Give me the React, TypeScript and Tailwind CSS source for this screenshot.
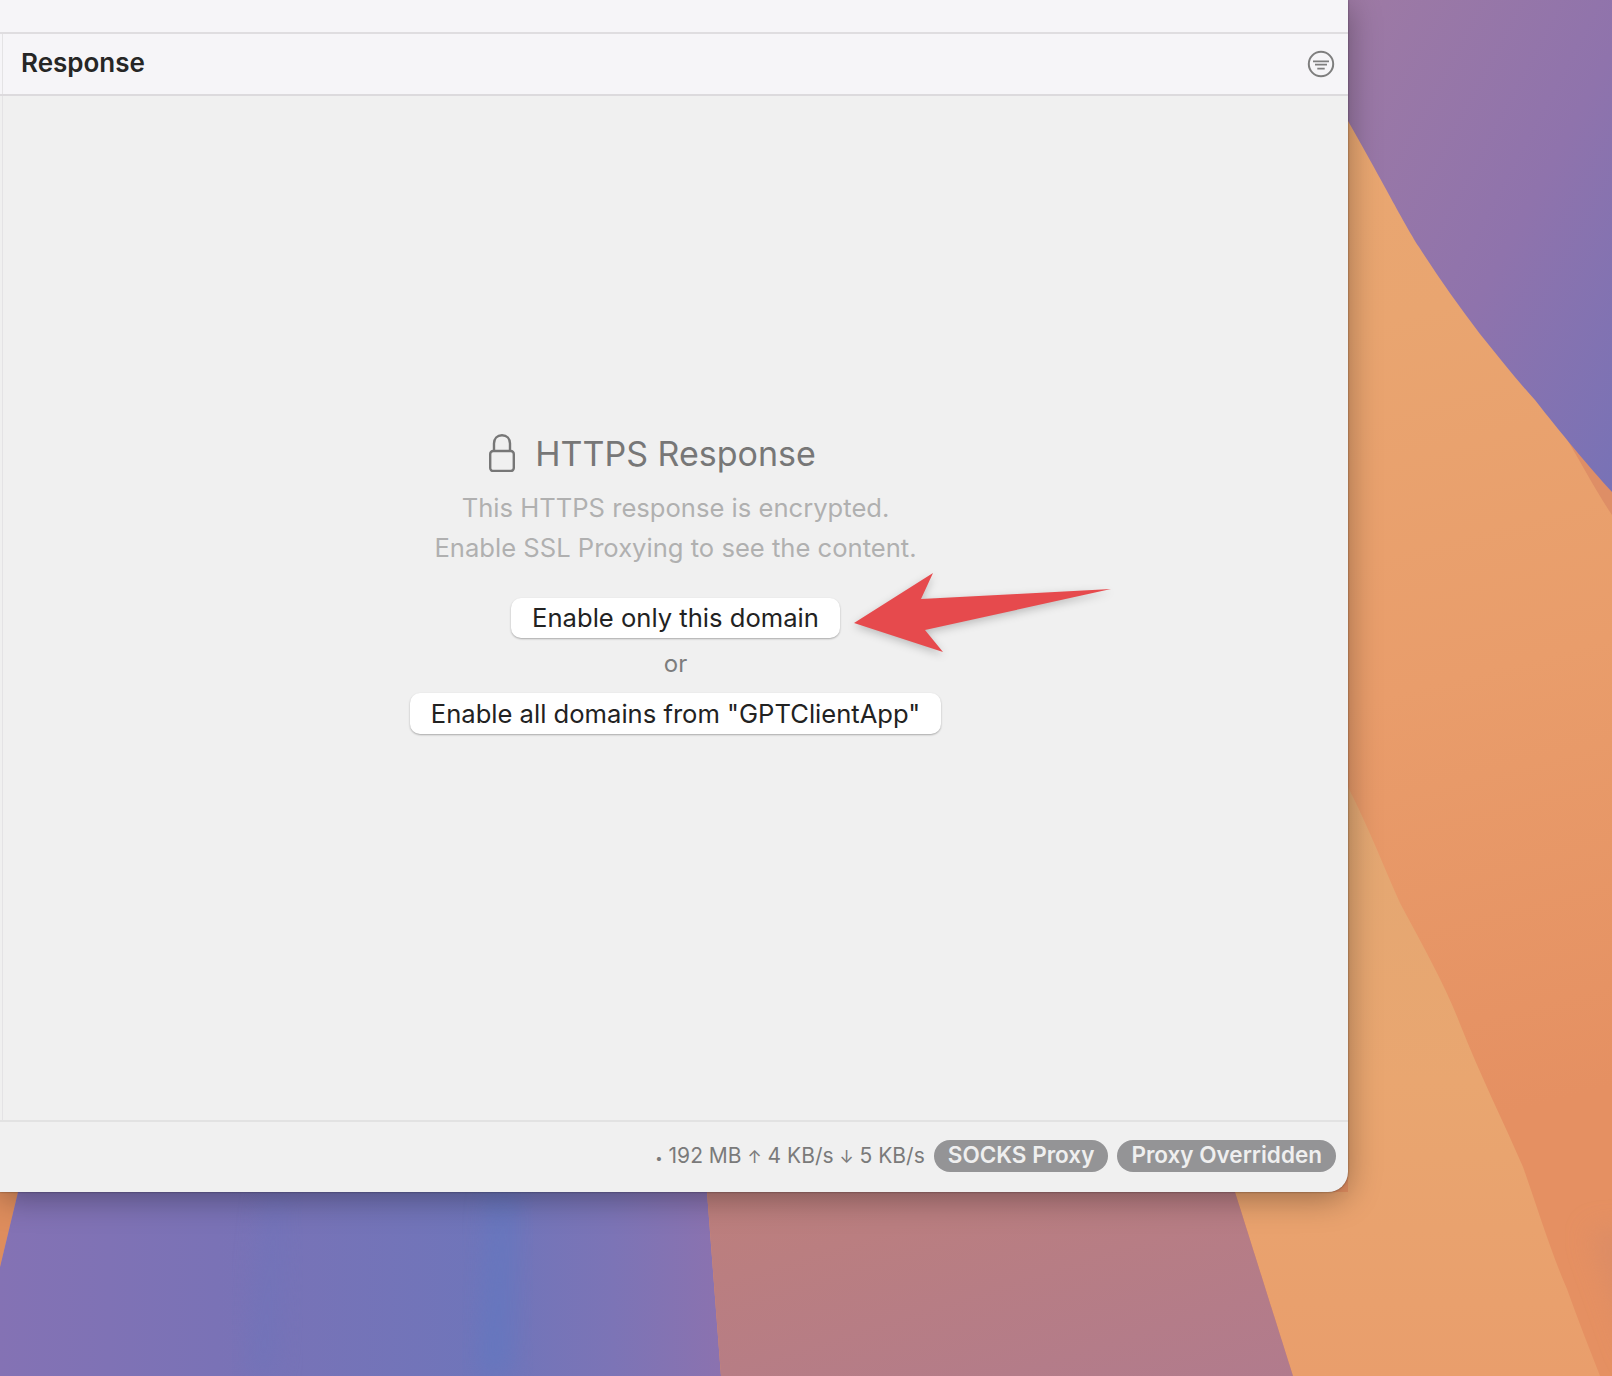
function Wallpaper() {
  return (
    <svg className="absolute inset-0" width="1612" height="1376" viewBox="0 0 1612 1376" aria-hidden>
      <defs>
        <linearGradient id="orange" x1="0" y1="0" x2="0.3" y2="1">
          <stop offset="0" stopColor="#e8ab74" />
          <stop offset="0.45" stopColor="#e9a570" />
          <stop offset="0.7" stopColor="#e99d6b" />
          <stop offset="1" stopColor="#e59062" />
        </linearGradient>
        <linearGradient id="band" x1="0" y1="0" x2="0" y2="1">
          <stop offset="0" stopColor="#e3a873" />
          <stop offset="0.5" stopColor="#e9a670" />
          <stop offset="1" stopColor="#e99e6c" />
        </linearGradient>
        <linearGradient id="corner" x1="0" y1="0" x2="1" y2="1">
          <stop offset="0" stopColor="#9e7aa4" />
          <stop offset="0.55" stopColor="#8f73ac" />
          <stop offset="1" stopColor="#7872b6" />
        </linearGradient>
        <linearGradient id="purple" x1="0" y1="0" x2="1" y2="0">
          <stop offset="0" stopColor="#8472b4" />
          <stop offset="0.3" stopColor="#7a72b6" />
          <stop offset="0.68" stopColor="#6f75ba" />
          <stop offset="0.85" stopColor="#7c74b6" />
          <stop offset="1" stopColor="#8b72af" />
        </linearGradient>
        <linearGradient id="mauve" x1="0" y1="0" x2="1" y2="1">
          <stop offset="0" stopColor="#bd7f7c" />
          <stop offset="1" stopColor="#b17b8d" />
        </linearGradient>
        <filter id="soft" x="-50%" y="-50%" width="200%" height="200%">
          <feGaussianBlur stdDeviation="14" />
        </filter>
      </defs>
      <rect width="1612" height="1376" fill="url(#orange)" />
      <path d="M1348 787 C1370 830 1385 870 1400 903 C1425 950 1445 985 1460 1024 C1480 1075 1505 1125 1523 1167 C1538 1210 1552 1255 1567 1289 C1578 1320 1590 1350 1600 1376 L1293 1376 L1235 1192 L1348 1192 Z" fill="url(#band)" />
      <path d="M1590 1230 L1640 1370 L1640 1230 Z" fill="#d78a68" filter="url(#soft)" opacity="0.7" />
      <path d="M1560 428 L1612 483 L1612 515 C1595 490 1580 460 1560 428 Z" fill="#de8e66" />
      <path d="M1348 0 L1612 0 L1612 492 C1590 468 1560 432 1535 400 C1515 378 1498 356 1480 334 C1458 305 1438 277 1419 247 C1402 220 1390 195 1348 121 Z" fill="url(#corner)" />
      <path d="M0 1192 L18 1192 L0 1267 Z" fill="#de8d5d" />
      <path d="M18 1192 L707 1192 L721 1376 L0 1376 L0 1267 Z" fill="url(#purple)" />
      <path d="M707 1192 L1235 1192 L1293 1376 L721 1376 Z" fill="url(#mauve)" />
      <path d="M495 1192 L515 1192 L510 1376 L480 1376 Z" fill="#5f78c2" filter="url(#soft)" opacity="0.7" />
      <path d="M270 1192 L285 1192 L272 1376 L250 1376 Z" fill="#6b74bc" filter="url(#soft)" opacity="0.6" />
    </svg>
  );
}

function FilterIcon() {
  return (
    <svg width="28" height="28" viewBox="0 0 28 28" fill="none" stroke="#7e7e7e" aria-hidden>
      <circle cx="14" cy="14" r="12.2" strokeWidth="2" />
      <path d="M6 11.3H22M8 14.7H20M10.3 18.7H17.7" strokeWidth="1.8" />
    </svg>
  );
}

function LockIcon() {
  return (
    <svg width="26" height="38" viewBox="0 0 26 38" fill="none" stroke="#777777" strokeWidth="2.4" aria-hidden>
      <rect x="1.2" y="17" width="23.6" height="20" rx="3" />
      <path d="M5 17V9.5C5 4.5 8.2 1.2 13 1.2S21 4.5 21 9.5V17" />
    </svg>
  );
}

function Arrow() {
  return (
    <svg
      className="absolute left-[844px] top-[530px] drop-shadow-[0_3px_4px_rgba(0,0,0,0.22)]"
      width="280"
      height="130"
      viewBox="844 530 280 130"
      aria-hidden
    >
      <path d="M854 623L933 573L921 599L1111 589L925 630L943 652Z" fill="#e64a4d" />
    </svg>
  );
}

function EnableButton({ label, className }: { label: string; className: string }) {
  return (
    <button className={`rounded-[10px] bg-white px-[21px] text-[25.6px] leading-none text-[#222222] shadow-[0_1px_2px_rgba(0,0,0,0.3)] ${className}`}>
      {label}
    </button>
  );
}

export default function App() {
  return (
    <div className="relative h-[1376px] w-[1612px] overflow-hidden font-['Inter',sans-serif]">
      <Wallpaper />
      <div className="relative flex h-[1192px] w-[1348px] flex-col overflow-hidden rounded-br-[20px] bg-[#f0f0f0] shadow-[0_6px_32px_rgba(0,0,0,0.34),0_0_2px_rgba(0,0,0,0.5)]">
        <div className="h-[32px] shrink-0 bg-[#f6f5f8]" />
        <div className="h-[2px] shrink-0 bg-[#dfdde0]" />
        <header className="flex h-[60px] shrink-0 items-center justify-between bg-[#f6f5f8] pl-[2px] pr-[13px]">
          <div className="flex h-full items-center border-l border-[#e4e3e5] pb-[3px] pl-[18px]">
            <span className="text-[26px] font-semibold text-[#262626]">Response</span>
          </div>
          <FilterIcon />
        </header>
        <div className="h-[2px] shrink-0 bg-[#dcdadd]" />
        <main className="ml-[2px] flex flex-1 flex-col items-center border-l border-[#e4e3e5] pt-[336px]">
          <h1 className="relative h-[44px] text-[34px] font-normal leading-[44px] text-[#777777]">
            <span className="absolute -left-[46px] top-[2px]">
              <LockIcon />
            </span>
            HTTPS Response
          </h1>
          <p className="mt-[12px] text-center text-[25.6px] leading-[40px] text-[#b0b0b0]">
            This HTTPS response is encrypted.
            <br />
            Enable SSL Proxying to see the content.
          </p>
          <EnableButton label="Enable only this domain" className="mt-[30px] h-[40px]" />
          <span className="mt-[11px] text-[24px] leading-[30px] text-[#7d7d7d]">or</span>
          <EnableButton label={'Enable all domains from "GPTClientApp"'} className="mt-[14px] h-[41px]" />
        </main>
        <footer className="flex h-[72px] shrink-0 items-start justify-end gap-[9px] border-t-2 border-[#e2e2e2] pr-3 pt-[18px]">
          <span className="text-[21px] leading-[32px] text-[#7a7a7a]">
            <span className="text-[13px]">•</span> 192 MB <span className="text-[17px]">↑</span> 4 KB/s <span className="text-[17px]">↓</span> 5 KB/s
          </span>
          <span className="rounded-full bg-[#949496] px-[14px] pb-[2px] text-[22.5px] font-semibold leading-[30px] text-[#efefef]">SOCKS Proxy</span>
          <span className="rounded-full bg-[#949496] px-[14px] pb-[2px] text-[22.5px] font-semibold leading-[30px] text-[#efefef]">Proxy Overridden</span>
        </footer>
        <Arrow />
      </div>
    </div>
  );
}
